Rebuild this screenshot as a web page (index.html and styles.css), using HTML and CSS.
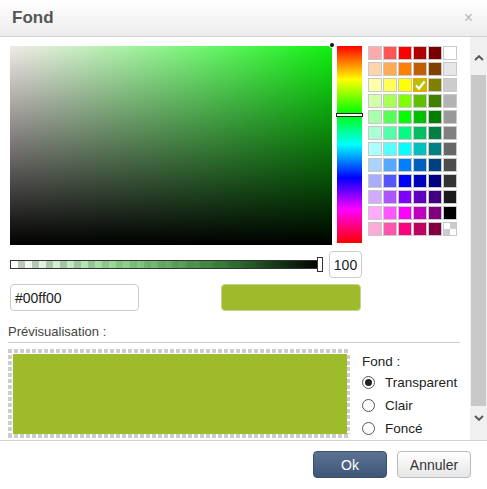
FILE: index.html
```html
<!DOCTYPE html>
<html lang="fr">
<head>
<meta charset="utf-8">
<title>Fond</title>
<link rel="stylesheet" href="styles.css">
</head>
<body>
<div class="dialog">
  <div class="header">
    <span class="title">Fond</span>
    <span class="close">×</span>
  </div>
  <div class="main">
    <div class="content">
      <div class="picker">
        <div class="sat"><span class="sat-marker"></span></div>
        <div class="hue"><span class="hue-marker"></span></div>
        <div class="palette">
          <span class="sw" style="background:#ffaaaa"></span><span class="sw" style="background:#ff5555"></span><span class="sw" style="background:#ff0000"></span><span class="sw" style="background:#b00000"></span><span class="sw" style="background:#780000"></span><span class="sw" style="background:#ffffff"></span>
          <span class="sw" style="background:#ffd4aa"></span><span class="sw" style="background:#ffaa55"></span><span class="sw" style="background:#ff8000"></span><span class="sw" style="background:#bf5f00"></span><span class="sw" style="background:#804000"></span><span class="sw" style="background:#e6e6e6"></span>
          <span class="sw" style="background:#ffffaa"></span><span class="sw" style="background:#ffff55"></span><span class="sw" style="background:#ffff00"></span><span class="sw selected" style="background:#bfbf00"><svg viewBox="0 0 14 14" width="14" height="14"><polyline points="3,7.5 6,10.5 11.5,3.5" fill="none" stroke="#fff" stroke-width="2.2"/></svg></span><span class="sw" style="background:#808000"></span><span class="sw" style="background:#cccccc"></span>
          <span class="sw" style="background:#d4ffaa"></span><span class="sw" style="background:#aaff55"></span><span class="sw" style="background:#80ff00"></span><span class="sw" style="background:#60bf00"></span><span class="sw" style="background:#408000"></span><span class="sw" style="background:#b3b3b3"></span>
          <span class="sw" style="background:#aaffaa"></span><span class="sw" style="background:#55ff55"></span><span class="sw" style="background:#00ff00"></span><span class="sw" style="background:#00bf00"></span><span class="sw" style="background:#008000"></span><span class="sw" style="background:#999999"></span>
          <span class="sw" style="background:#aaffd4"></span><span class="sw" style="background:#55ffaa"></span><span class="sw" style="background:#00ff80"></span><span class="sw" style="background:#00bf60"></span><span class="sw" style="background:#008040"></span><span class="sw" style="background:#808080"></span>
          <span class="sw" style="background:#aaffff"></span><span class="sw" style="background:#55ffff"></span><span class="sw" style="background:#00ffff"></span><span class="sw" style="background:#00bfbf"></span><span class="sw" style="background:#008080"></span><span class="sw" style="background:#666666"></span>
          <span class="sw" style="background:#aad4ff"></span><span class="sw" style="background:#55aaff"></span><span class="sw" style="background:#0080ff"></span><span class="sw" style="background:#0060bf"></span><span class="sw" style="background:#004080"></span><span class="sw" style="background:#4d4d4d"></span>
          <span class="sw" style="background:#aaaaff"></span><span class="sw" style="background:#5555ff"></span><span class="sw" style="background:#0000ff"></span><span class="sw" style="background:#0000bf"></span><span class="sw" style="background:#000080"></span><span class="sw" style="background:#333333"></span>
          <span class="sw" style="background:#d4aaff"></span><span class="sw" style="background:#aa55ff"></span><span class="sw" style="background:#8000ff"></span><span class="sw" style="background:#6000bf"></span><span class="sw" style="background:#400080"></span><span class="sw" style="background:#1a1a1a"></span>
          <span class="sw" style="background:#ffaaff"></span><span class="sw" style="background:#ff55ff"></span><span class="sw" style="background:#ff00ff"></span><span class="sw" style="background:#bf00bf"></span><span class="sw" style="background:#800080"></span><span class="sw" style="background:#000000"></span>
          <span class="sw" style="background:#ffaad4"></span><span class="sw" style="background:#ff55aa"></span><span class="sw" style="background:#ff0080"></span><span class="sw" style="background:#bf0060"></span><span class="sw" style="background:#800040"></span><span class="sw transparent"></span>
        </div>
      </div>
      <div class="alpha-row">
        <div class="alpha"><span class="alpha-handle"></span></div>
        <div class="field alpha-value">100</div>
      </div>
      <div class="hex-row">
        <div class="field hex">#00ff00</div>
        <div class="current"></div>
      </div>
      <div class="preview-section">
        <div class="preview-label">Prévisualisation :</div>
        <div class="preview-row">
          <div class="preview-box"><div class="preview-fill"></div></div>
          <div class="bg-options">
            <div class="bg-title">Fond :</div>
            <div class="option"><span class="radio checked"></span>Transparent</div>
            <div class="option"><span class="radio"></span>Clair</div>
            <div class="option"><span class="radio"></span>Foncé</div>
          </div>
        </div>
      </div>
    </div>
    <div class="scrollbar">
      <div class="sb-up"><svg viewBox="0 0 10 6" width="10" height="6"><polyline points="1,5 5,1.2 9,5" fill="none" stroke="#5a5a5a" stroke-width="2"/></svg></div>
      <div class="sb-thumb"></div>
      <div class="sb-down"><svg viewBox="0 0 10 6" width="10" height="6"><polyline points="1,1 5,4.8 9,1" fill="none" stroke="#5a5a5a" stroke-width="2"/></svg></div>
    </div>
  </div>
  <div class="footer">
    <button class="btn btn-primary">Ok</button>
    <button class="btn btn-default">Annuler</button>
  </div>
</div>
</body>
</html>
```
FILE: styles.css
```css
* { box-sizing: border-box; }
html, body { margin: 0; padding: 0; background: #fff; }
body { font-family: "Liberation Sans", Arial, sans-serif; color: #333; }

.dialog {
  width: 487px;
  height: 489px;
  display: flex;
  flex-direction: column;
  overflow: hidden;
}

.header {
  height: 37px;
  flex: none;
  display: flex;
  align-items: center;
  justify-content: space-between;
  padding: 0 14px 0 12px;
  background: linear-gradient(to bottom, #ffffff, #ececec);
  border-bottom: 1px solid #d2d2d2;
}
.title { font-size: 17px; font-weight: bold; color: #555; }
.close { font-size: 16px; color: #b8b8b8; }

.main {
  height: 403px;
  flex: none;
  display: flex;
}
.content {
  flex: 1;
  overflow: hidden;
  padding: 9px 0 0 10px;
}

.picker { display: flex; align-items: flex-start; }
.sat {
  position: relative;
  width: 322px;
  height: 199px;
  flex: none;
  background:
    linear-gradient(to bottom, rgba(0,0,0,0), #000),
    linear-gradient(to right, rgba(150,80,70,0.12), rgba(150,80,70,0) 60%),
    linear-gradient(to right, #fff, #10f010);
}
.sat-marker {
  position: absolute;
  right: -2px;
  top: -3px;
  width: 4px;
  height: 4px;
  border-radius: 50%;
  background: #111;
  box-shadow: 0 0 0 1px rgba(255,255,255,0.7);
}
.hue {
  position: relative;
  margin-left: 5px;
  width: 25px;
  height: 197px;
  flex: none;
  background: linear-gradient(to bottom, #f00 0%, #ff0 17%, #0f0 34%, #0ff 50%, #00f 67%, #f0f 83%, #f00 100%);
}
.hue-marker {
  position: absolute;
  left: -1px;
  right: -1px;
  top: 67px;
  height: 4px;
  background: #fff;
  border: 1px solid #222;
}
.palette {
  margin-left: 6px;
  display: grid;
  grid-template-columns: repeat(6, 14px);
  grid-auto-rows: 14px;
  column-gap: 1px;
  row-gap: 2px;
}
.sw {
  display: block;
  width: 14px;
  height: 14px;
  border: 1px solid #c8c8c8;
}
.sw svg { display: block; margin: -1px; }
.sw.selected { border-color: #ff9a00; }
.sw.transparent {
  background:
    linear-gradient(#ccc, #ccc) 0 6px / 6px 6px no-repeat,
    linear-gradient(#ccc, #ccc) 6px 0 / 6px 6px no-repeat,
    #fff;
}

.alpha-row {
  margin-top: 6px;
  display: flex;
  align-items: center;
  gap: 7px;
}
.alpha {
  position: relative;
  width: 312px;
  height: 9px;
  border: 1px solid #333;
  background:
    linear-gradient(to right, rgba(120,200,120,0) 0%, rgba(110,200,110,0.75) 35%, rgba(40,110,40,0.95) 70%, #000 100%),
    repeating-conic-gradient(#c4c4c4 0 25%, #fff 0 50%) 0 0 / 14px 14px;
}
.alpha-handle {
  position: absolute;
  right: -2px;
  top: -4px;
  width: 6px;
  height: 15px;
  background: #fff;
  border: 1px solid #333;
}
.field {
  height: 27px;
  border: 1px solid #ccc;
  border-radius: 4px;
  font-size: 14px;
  color: #222;
  display: flex;
  align-items: center;
}
.alpha-value { width: 33px; justify-content: center; }

.hex-row {
  margin-top: 6px;
  width: 351px;
  display: flex;
  justify-content: space-between;
}
.hex { width: 129px; padding-left: 4px; }
.current {
  width: 140px;
  height: 27px;
  border-radius: 4px;
  background: #9dbb2b;
  border: 1px solid #c6d38f;
}

.preview-section { margin-left: -2px; }
.preview-label {
  margin-top: 13px;
  width: 452px;
  font-size: 13px;
  line-height: 16px;
  color: #444;
  padding-bottom: 2px;
  border-bottom: 1px solid #ccc;
}
.preview-row {
  margin-top: 6px;
  display: flex;
  align-items: flex-start;
}
.preview-box {
  width: 342px;
  height: 89px;
  flex: none;
  padding: 5px 3px 0 5px;
  background:
    repeating-linear-gradient(to right, #cdcdcd 0 4px, #fff 4px 6px) left top / 100% 4px no-repeat,
    repeating-linear-gradient(to right, #cdcdcd 0 4px, #fff 4px 6px) left bottom / 100% 4px no-repeat,
    repeating-linear-gradient(to bottom, #cdcdcd 0 4px, #fff 4px 6px) left top / 4px 100% no-repeat,
    repeating-linear-gradient(to bottom, #cdcdcd 0 4px, #fff 4px 6px) right top / 3px 100% no-repeat,
    #fff;
}
.preview-fill {
  width: 334px;
  height: 80px;
  background: #9dbb2b;
}
.bg-options {
  margin-left: 12px;
  font-size: 13.5px;
  color: #222;
}
.bg-title { line-height: 18px; margin-top: 4px; }
.option {
  display: flex;
  align-items: center;
  height: 23px;
}
.radio {
  width: 13px;
  height: 13px;
  border: 1px solid #555;
  border-radius: 50%;
  margin-right: 10px;
  display: flex;
  align-items: center;
  justify-content: center;
  background: #fff;
}
.radio.checked::after {
  content: "";
  width: 7px;
  height: 7px;
  border-radius: 50%;
  background: #222;
}

.scrollbar {
  width: 17px;
  flex: none;
  background: #f0f0f0;
  display: flex;
  flex-direction: column;
}
.sb-up {
  height: 38px;
  display: flex;
  justify-content: center;
  padding-top: 18px;
}
.sb-thumb {
  height: 331px;
  margin: 0 1px;
  background: #c8c8c8;
}
.sb-down {
  flex: 1;
  display: flex;
  justify-content: center;
  padding-top: 9px;
}
.sb-up svg, .sb-down svg { display: block; }

.footer {
  flex: 1;
  border-top: 1px solid #d2d2d2;
  display: flex;
  justify-content: flex-end;
  align-items: flex-start;
  padding: 10px 16px 0 0;
  gap: 10px;
}
.btn {
  height: 27px;
  width: 74px;
  border-radius: 4px;
  font-family: "Liberation Sans", Arial, sans-serif;
  font-size: 14px;
  padding: 0;
}
.btn-primary {
  color: #fff;
  border: 1px solid #3a5070;
  background: linear-gradient(to bottom, #5d7394, #3e5577);
}
.btn-default {
  color: #333;
  border: 1px solid #bbb;
  background: linear-gradient(to bottom, #ffffff, #e6e6e6);
}
```
